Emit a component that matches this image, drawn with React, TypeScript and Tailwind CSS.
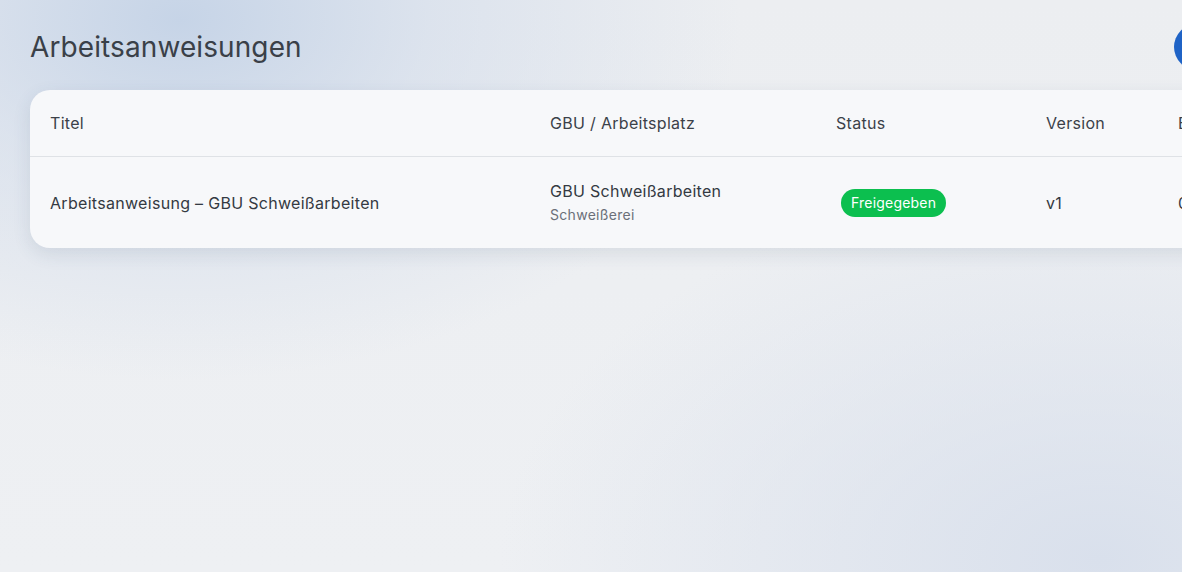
import React from "react"

const rows = [
  {
    title: "Arbeitsanweisung – GBU Schweißarbeiten",
    gbu: "GBU Schweißarbeiten",
    place: "Schweißerei",
    status: "Freigegeben",
    version: "v1",
    created: "05.06.2024",
  },
]

export default function App() {
  return (
    <div
      className="relative h-[572px] w-[1182px] overflow-hidden text-[#343a42]"
      style={{ fontFamily: "Inter, 'Noto Sans', sans-serif" }}
    >
      <div className="absolute inset-0 bg-[radial-gradient(ellipse_560px_360px_at_180px_20px,#c6d4e7_0%,rgba(210,220,235,0.6)_45%,transparent_100%),radial-gradient(ellipse_600px_380px_at_1100px_560px,#d9e0ec_0%,transparent_100%),linear-gradient(180deg,#eceef1,#eef0f3)]" />
      <div className="relative px-[30px] pt-[28px]">
        <div className="flex h-[38px] items-center justify-between">
          <h1 className="text-[28px] font-normal tracking-[0.1px] text-[#3a4048]">Arbeitsanweisungen</h1>
          <button className="mr-[-68px] h-[46px] w-[46px] rounded-full bg-[#1f63c6]" />
        </div>

        <div className="mt-[24px] w-[1320px] overflow-hidden rounded-[20px] bg-[#f7f8fa] shadow-[0_6px_18px_rgba(60,80,110,0.12)]">
          <div className="grid h-[67px] grid-cols-[500px_286px_210px_132px_1fr] items-center border-b border-[#dfe2e6] px-[20px] text-[16px] tracking-[0.3px] text-[#3b4149]">
            <div>Titel</div>
            <div>GBU / Arbeitsplatz</div>
            <div>Status</div>
            <div>Version</div>
            <div>Erstellt</div>
          </div>
          {rows.map((r) => (
            <div
              key={r.title}
              className="grid h-[91px] grid-cols-[500px_286px_210px_132px_1fr] items-center px-[20px] text-[16px] tracking-[0.3px]"
            >
              <div>{r.title}</div>
              <div className="flex flex-col">
                <span className="leading-[22px]">{r.gbu}</span>
                <span className="mt-[3px] text-[14px] leading-[20px] text-[#6b7079]">{r.place}</span>
              </div>
              <div>
                <span className="ml-[5px] inline-flex h-[28px] items-center rounded-full bg-[#0cbf4f] px-[10px] text-[14px] tracking-[0.2px] text-white">
                  {r.status}
                </span>
              </div>
              <div>{r.version}</div>
              <div>{r.created}</div>
            </div>
          ))}
        </div>
      </div>
    </div>
  )
}
